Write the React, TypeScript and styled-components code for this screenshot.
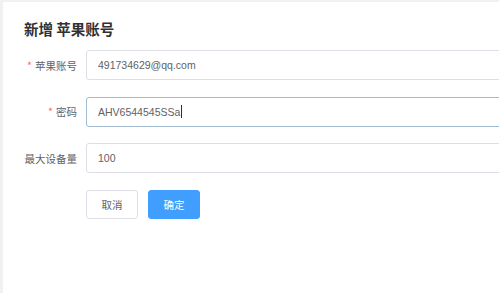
import React from 'react';
import styled, { createGlobalStyle } from 'styled-components';

const GlobalStyle = createGlobalStyle`
  html, body {
    margin: 0;
    padding: 0;
    background: #f0f1f3;
    overflow: hidden;
  }
  body {
    font-family: "Liberation Sans", "Noto Sans CJK SC", sans-serif;
  }
`;

const Card = styled.div`
  margin: 2px 0 0 3px;
  width: calc(100vw - 3px);
  height: 291px;
  background: #ffffff;
  box-sizing: border-box;
  padding: 17px 0 0 21px;
  overflow: hidden;
`;

const Title = styled.h2`
  margin: 0 0 11px;
  font-size: 14.5px;
  line-height: 20px;
  font-weight: 700;
  color: #303133;
  font-family: "Noto Sans CJK SC", sans-serif;
`;

// inputs run on past the right edge, as in the shot
const Form = styled.div`
  width: 600px;
  display: flex;
  flex-direction: column;
  gap: 16.5px;
`;

const Row = styled.div`
  display: flex;
  align-items: center;
  height: 30px;
`;

const ButtonRow = styled(Row)`
  margin-top: 0.5px;
  padding-left: 62px;
  gap: 10px;
  height: 29px;
`;

const Label = styled.label`
  width: 62px;
  box-sizing: border-box;
  padding-right: 9px;
  text-align: right;
  font-size: 10.5px;
  color: #606266;
  font-family: "Noto Sans CJK SC", sans-serif;
  white-space: nowrap;
`;

const Star = styled.span`
  color: #f56c6c;
  margin-right: 3px;
`;

const Field = styled.div<{ $focused?: boolean }>`
  flex: 1;
  height: 30px;
  box-sizing: border-box;
  border: 1px solid ${(p) => (p.$focused ? '#9fbcd3' : '#dcdfe6')};
  border-radius: 3px;
  padding: 0 11px;
  display: flex;
  align-items: center;
  font-size: 10.5px;
  color: #606266;
  background: #fff;
`;

const Caret = styled.span`
  display: inline-block;
  width: 1px;
  height: 13px;
  background: #303133;
  margin-left: 0.5px;
`;

const Button = styled.button<{ $primary?: boolean }>`
  width: 52px;
  height: 29px;
  box-sizing: border-box;
  border-radius: 3px;
  border: 1px solid ${(p) => (p.$primary ? '#409eff' : '#dcdfe6')};
  background: ${(p) => (p.$primary ? '#409eff' : '#ffffff')};
  color: ${(p) => (p.$primary ? '#ffffff' : '#606266')};
  font-size: 10.5px;
  font-family: "Noto Sans CJK SC", sans-serif;
  padding: 0;
  cursor: pointer;
`;

export default function App() {
  return (
    <>
      <GlobalStyle />
      <Card>
        <Title>新增 苹果账号</Title>
        <Form>
          <Row>
            <Label>
              <Star>*</Star>苹果账号
            </Label>
            <Field>491734629@qq.com</Field>
          </Row>
          <Row>
            <Label>
              <Star>*</Star>密码
            </Label>
            <Field $focused>
              AHV6544545SSa
              <Caret />
            </Field>
          </Row>
          <Row>
            <Label>最大设备量</Label>
            <Field>100</Field>
          </Row>
          <ButtonRow>
            <Button>取消</Button>
            <Button $primary>确定</Button>
          </ButtonRow>
        </Form>
      </Card>
    </>
  );
}
